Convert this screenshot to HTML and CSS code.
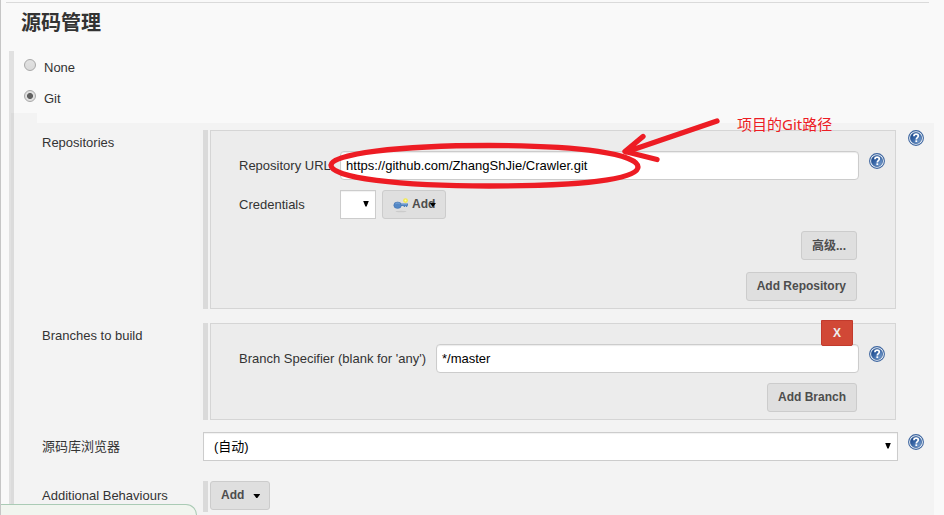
FILE: index.html
```html
<!DOCTYPE html>
<html lang="zh-CN">
<head>
<meta charset="utf-8">
<title>源码管理</title>
<link rel="stylesheet" href="styles.css">
</head>
<body>
<svg class="defs" width="0" height="0">
  <defs>
    <linearGradient id="blue" x1="0" y1="0" x2="1" y2="1">
      <stop offset="0" stop-color="#163f82"/><stop offset=".45" stop-color="#3866a6"/><stop offset="1" stop-color="#8db1dc"/>
    </linearGradient>
    <symbol id="help" viewBox="0 0 16 16">
      <circle cx="8" cy="8" r="7.400" fill="#f4f8fc" stroke="#3d659f" stroke-width="1.100"/>
      <circle cx="8" cy="8" r="5.600" fill="url(#blue)" stroke="#24508f" stroke-width=".6"/>
      <path d="M5.900 6.200C6 4.700 7 4.200 8.100 4.200c1.400 0 2.200.8 2.200 1.900 0 1.500-2 1.700-2 3.300" fill="none" stroke="#fff" stroke-width="1.700"/>
      <rect x="7.400" y="10.300" width="1.800" height="1.700" fill="#fff"/>
    </symbol>
  </defs>
</svg>
<div class="page">
  <h1 class="title">源码管理</h1>
  <div class="section">
    <label class="choice"><span class="radio"></span>None</label>
    <label class="choice"><span class="radio on"></span>Git</label>
    <div class="tab"></div>
    <div class="panel">
      <div class="row repos">
        <div class="label">Repositories</div>
        <div class="chunk">
          <div class="box">
            <div class="field url">
              <span class="name">Repository URL</span>
              <div class="input">https://github.com/ZhangShJie/Crawler.git</div>
              <svg class="help"><use href="#help"/></svg>
            </div>
            <div class="field cred">
              <span class="name">Credentials</span>
              <div class="select small"><i class="arrow"></i></div>
              <div class="button key">
                <svg class="keyicon" viewBox="0 0 16 16">
                  <ellipse cx="8" cy="14.500" rx="5.500" ry=".7" fill="#cbcbcb"/>
                  <circle cx="12.500" cy="3.600" r="2.400" fill="#f1e94e"/><circle cx="12.500" cy="3.400" r="1" fill="#fffbb0"/>
                  <path d="M7 6.600h8v2.200h-.8v1.300h-1.300V8.900h-.8v1.200h-1.400V8.900H7Z" fill="#4f82bf"/>
                  <ellipse cx="4.600" cy="8.200" rx="3.800" ry="3.200" fill="#5488c6" stroke="#3c6fac" stroke-width=".5"/>
                  <path d="M2.600 6.700c1.300-.9 2.800-.9 4 0M8 7.200h6" fill="none" stroke="#92b6de" stroke-width=".7"/>
                </svg>
                <span>Add</span><i class="caret"></i>
              </div>
            </div>
            <div class="actions"><div class="button more">高级...</div></div>
            <div class="actions"><div class="button">Add Repository</div></div>
          </div>
        </div>
        <svg class="help"><use href="#help"/></svg>
      </div>
      <div class="row branches">
        <div class="label">Branches to build</div>
        <div class="chunk">
          <div class="box">
            <div class="delete">X</div>
            <div class="field spec">
              <span class="name">Branch Specifier (blank for 'any')</span>
              <div class="input">*/master</div>
              <svg class="help"><use href="#help"/></svg>
            </div>
            <div class="actions"><div class="button">Add Branch</div></div>
          </div>
        </div>
      </div>
      <div class="row browser">
        <div class="label">源码库浏览器</div>
        <div class="select wide">(自动)<i class="arrow"></i></div>
        <svg class="help"><use href="#help"/></svg>
      </div>
      <div class="row extra">
        <div class="label">Additional Behaviours</div>
        <div class="chunk"><div class="button add"><span>Add</span><i class="caret"></i></div></div>
      </div>
    </div>
  </div>
  <div class="status"></div>
  <svg class="marks" viewBox="0 0 944 515">
    <path d="M331 165C332 154 397 145.500 489 145.500S638 154 638 167S577 186 489 186S330 178 331 165Z"/>
    <path d="M717 121L626 152M643 136.500L625 151.500L657 159.500"/>
  </svg>
  <div class="note">项目的Git路径</div>
</div>
</body>
</html>
```

FILE: styles.css
```css
* { box-sizing: border-box; }
body {
  margin: 0;
  background: #f9f9f9;
  color: #333;
  font: 13px/18px "Liberation Sans", "Noto Sans CJK SC", sans-serif;
}
.defs { position: absolute; }
.page {
  position: relative;
  height: 515px;
  overflow: hidden;
  border-left: 1px solid #c6c6c6;
}
.page::before {
  content: "";
  display: block;
  width: 923px;
  height: 1px;
  margin: 2px 0 0 5px;
  background: #dadada;
}
.title {
  height: 28px;
  margin: 6px 0 14px 20px;
  font: bold 20px/28px "Liberation Serif", "Noto Sans CJK SC", serif;
}
.section {
  height: 470px;
  margin-left: 8px;
  border-left: 5px solid #e1e1e1;
}
.choice {
  display: flex;
  align-items: center;
  height: 31px;
  padding: 2px 0 0 10px;
}
.radio {
  position: relative;
  width: 12px;
  height: 12px;
  margin: -6px 8px 0 0;
  border: 1px solid #a8a8a8;
  border-radius: 50%;
  background: linear-gradient(#e2e2e2, #dadada);
}
.radio.on { background: radial-gradient(circle, #606060 0 2.600px, #e0e0e0 3.400px); }
.tab {
  width: 26px;
  height: 10px;
  margin-left: -3px;
  background: rgba(0, 0, 0, .025);
}
.panel {
  width: 923px;
  height: 400px;
  margin-left: -3px;
  padding: 7px 0 0 31px;
  background: rgba(0, 0, 0, .025);
}
.row { display: flex; align-items: flex-start; }
.label { width: 161px; padding-top: 4px; }
.chunk {
  width: 693px;
  padding-left: 2px;
  border-left: 5px solid #dadada;
}
.box {
  position: relative;
  height: 100%;
  border: 1px solid #d5d5d5;
  background: #ececec;
  padding: 20px 10px 0 28px;
}
.help { width: 16px; height: 16px; }
.row > .help { margin-left: 12px; }
.browser > .help { margin: 2px 0 0 10px; }
.field { display: flex; align-items: center; }
.field .help { margin: -9px 0 0 10px; }
.name { width: 101px; white-space: nowrap; }
.input {
  flex: 1;
  height: 29px;
  padding: 0 5px;
  border: 1px solid #ccc;
  border-radius: 4px;
  background: #fff;
  box-shadow: inset 0 1px 1px rgba(0, 0, 0, .08);
  color: #000;
  line-height: 27px;
}
.url .input { letter-spacing: .02px; }
.cred { margin-top: 10px; }
.select {
  display: flex;
  align-items: center;
  justify-content: space-between;
  height: 29px;
  border: 1px solid #ccc;
  background: #fff;
  box-shadow: inset 0 1px 1px rgba(0, 0, 0, .06);
  color: #000;
}
.small { width: 36px; padding: 0 6px 2px 22px; }
.wide { width: 695px; padding: 0 6px 0 10px; }
.arrow {
  width: 6px;
  height: 6px;
  background: #000;
  clip-path: polygon(0 0, 100% 0, 60% 100%, 40% 100%);
}
.wide .arrow { margin-top: -2px; }
.button {
  display: flex;
  align-items: center;
  height: 29px;
  padding: 0 10px 2px;
  border: 1px solid #ccc;
  border-radius: 3px;
  background: #dfdfdf;
  color: #4d4d4d;
  font-size: 12px;
  font-weight: bold;
}
.more { padding-bottom: 0; }
.key { width: 64px; margin-left: 6px; }
.keyicon { flex: none; width: 16px; height: 16px; margin: 3px 3px 0 0; }
.caret {
  flex: none;
  width: 7px;
  height: 4px;
  background: #000;
  clip-path: polygon(0 0, 100% 0, 57% 100%, 43% 100%);
}
.key .caret { margin: 2px 0 0 -6px; }
.actions { display: flex; justify-content: flex-end; padding-right: 28px; margin-top: 12px; }
.repos { height: 179px; }
.repos .chunk, .branches .chunk { height: 100%; }
.branches { height: 97px; margin-top: 14px; }
.spec .name { width: 197px; }
.branches .actions { margin-top: 10px; }
.delete {
  position: absolute;
  top: -4px;
  right: 42px;
  width: 32px;
  height: 26px;
  border: 1px solid #c23a2c;
  border-radius: 0 0 2px 2px;
  background: #d14836;
  color: #eee;
  font-size: 12px;
  font-weight: bold;
  line-height: 24px;
  text-align: center;
}
.browser { margin-top: 12px; }
.browser .label { padding-top: 6px; }
.extra { margin-top: 20px; }
.extra .label { padding-top: 6px; }
.extra .chunk { height: 31px; }
.add { width: 60px; }
.add .caret { margin: 3px 0 0 9px; }
.status {
  position: absolute;
  left: 0;
  top: 504px;
  width: 196px;
  height: 20px;
  border: 1px solid #aacbb5;
  border-width: 1px 1px 0 0;
  border-radius: 0 11px 0 0;
  background: #f1f5ef;
}
.marks {
  position: absolute;
  left: -1px;
  top: 0;
  width: 944px;
  height: 515px;
  fill: none;
  stroke: #ed1c24;
  stroke-width: 5.300;
  stroke-linecap: round;
  stroke-linejoin: round;
}
.note {
  position: absolute;
  left: 736px;
  top: 114px;
  color: #ed1c24;
  font: 15px/20px "Noto Sans", "Noto Sans CJK SC", sans-serif;
  white-space: nowrap;
}
```
